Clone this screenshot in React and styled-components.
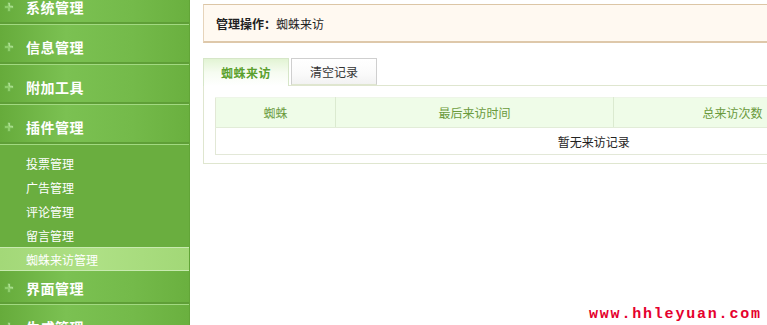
import React from "react";
import styled, { createGlobalStyle } from "styled-components";

const Global = createGlobalStyle`
  html, body { margin: 0; padding: 0; overflow: hidden; background: #fff; }
  body { font-family: "Noto Sans CJK SC", "Noto Sans", sans-serif; font-size: 12px; color: #333; }
  * { box-sizing: border-box; }
`;

const Page = styled.div`
  display: flex;
  width: 983px;
  height: 325px;
  position: relative;
`;

const Sidebar = styled.nav`
  width: 190px;
  flex-shrink: 0;
  height: 340px;
  margin-top: -15px;
  background: #6aae3f;
  border-right: 1px solid #62a538;
  display: flex;
  flex-direction: column;
`;

const Header = styled.div`
  height: ${(p) => (p.$compact ? 34 : 40)}px;
  padding-top: ${(p) => (p.$compact ? 0 : 5)}px;
  padding-left: 4px;
  display: flex;
  align-items: center;
  gap: 12px;
  color: #fff;
  font-weight: bold;
  font-size: 14px;
  letter-spacing: 0.5px;
  background: linear-gradient(to right, #66ab3b 0%, #7bc152 35%, #74ba4a 70%, #6ab03f 100%);
  border-bottom: 1px solid #a2d981;
  box-shadow: inset 0 -2px 0 #5f9f37;
  flex-shrink: 0;
`;

const Sub = styled.ul`
  list-style: none;
  margin: 0;
  padding: 6px 0 0;
  flex-shrink: 0;
`;

const SubItem = styled.li`
  height: 24px;
  line-height: 23px;
  padding-left: 26px;
  color: #fff;
  font-size: 12px;
  background: ${(p) =>
    p.$active ? "linear-gradient(to right, #a3d878, #aee085 50%, #a2d877)" : "transparent"};
  border-top: 1px solid ${(p) => (p.$active ? "#c8eab0" : "transparent")};
  border-bottom: 1px solid ${(p) => (p.$active ? "#c8eab0" : "transparent")};
`;

const Main = styled.main`
  flex: 1;
  padding: 4px 0 0 13px;
`;

const InfoBar = styled.div`
  width: 780px;
  height: 39px;
  background: #fff9f1;
  border-top: 1px solid #dcc6a6;
  border-bottom: 2px solid #dec8aa;
  border-left: 1px solid #e6d4bb;
  padding-left: 12px;
  display: flex;
  align-items: center;
  font-size: 12px;
  color: #222;
`;

const Strong = styled.b`
  font-weight: bold;
`;

const Tabs = styled.div`
  display: flex;
  gap: 2px;
  margin-top: 15px;
  height: 27px;
  position: relative;
  z-index: 1;
`;

const Tab = styled.div`
  width: 86px;
  height: ${(p) => (p.$active ? 28 : 27)}px;
  display: flex;
  align-items: center;
  justify-content: center;
  font-size: 12px;
  letter-spacing: ${(p) => (p.$active ? "0.5px" : "0")};
  font-weight: ${(p) => (p.$active ? "bold" : "normal")};
  color: ${(p) => (p.$active ? "#5aa02c" : "#333")};
  border: 1px solid ${(p) => (p.$active ? "#d6e6c8" : "#cfcfcf")};
  border-bottom: ${(p) => (p.$active ? "none" : "1px solid #dfe6cf")};
  background: ${(p) =>
    p.$active
      ? "linear-gradient(to bottom, #e2f4d4 0%, #f6fcf1 50%, #ffffff 100%)"
      : "linear-gradient(to bottom, #ffffff 0%, #fafafa 60%, #f2f2f2 100%)"};
`;

const Panel = styled.div`
  width: 780px;
  border: 1px solid #dfe6cf;
  padding: 11px 11px 8px;
  background: #fff;
`;

const Table = styled.table`
  width: 756px;
  border-collapse: collapse;
  table-layout: fixed;
  border-left: 1px solid #e2e8d6;
`;

const Th = styled.th`
  width: ${(p) => p.$w}px;
  height: 30px;
  background: #effce8;
  color: #6a9a3c;
  font-weight: normal;
  font-size: 12px;
  text-align: center;
  border-right: 1px solid #dbead0;
  border-bottom: 1px solid #e2ecd8;
  border-top: 1px solid #eef5e8;
`;

const Empty = styled.td`
  height: 27px;
  text-align: center;
  font-size: 12px;
  color: #222;
  border-bottom: 1px solid #e3e8d8;
  padding: 0;
`;

const Watermark = styled.div`
  position: absolute;
  left: 589px;
  top: 306px;
  font-family: "Liberation Mono", "DejaVu Sans Mono", monospace;
  font-weight: bold;
  font-size: 15px;
  letter-spacing: 1.8px;
  color: #e5002d;
  line-height: 18px;
`;

const Plus = () => (
  <svg width="10" height="10" viewBox="0 0 10 10">
    <path d="M3.5 0.5h3v3h3v3h-3v3h-3v-3h-3v-3h3z" fill="#8fcf6c" stroke="#68ad45" strokeWidth="0.7" />
    <path d="M4.2 1.2h1.2v3h3v1.2" fill="none" stroke="#c2e8aa" strokeWidth="0.7" />
  </svg>
);

const headers1 = ["系统管理", "信息管理", "附加工具", "插件管理"];
const subs = ["投票管理", "广告管理", "评论管理", "留言管理", "蜘蛛来访管理"];

export default function App() {
  return (
    <>
      <Global />
      <Page>
        <Sidebar>
          {headers1.map((h) => (
            <Header key={h}>
              <Plus />
              <span>{h}</span>
            </Header>
          ))}
          <Sub>
            {subs.map((s, i) => (
              <SubItem key={s} $active={i === subs.length - 1}>
                {s}
              </SubItem>
            ))}
          </Sub>
          <Header $compact>
            <Plus />
            <span>界面管理</span>
          </Header>
          <Header>
            <Plus />
            <span>生成管理</span>
          </Header>
        </Sidebar>
        <Main>
          <InfoBar>
            <Strong>管理操作：</Strong>蜘蛛来访
          </InfoBar>
          <Tabs>
            <Tab $active>蜘蛛来访</Tab>
            <Tab>清空记录</Tab>
          </Tabs>
          <Panel>
            <Table>
              <thead>
                <tr>
                  <Th $w={120}>蜘蛛</Th>
                  <Th $w={278}>最后来访时间</Th>
                  <Th $w={238}>总来访次数</Th>
                  <Th $w={120}></Th>
                </tr>
              </thead>
              <tbody>
                <tr>
                  <Empty colSpan={4}>暂无来访记录</Empty>
                </tr>
              </tbody>
            </Table>
          </Panel>
        </Main>
        <Watermark>www.hhleyuan.com</Watermark>
      </Page>
    </>
  );
}
